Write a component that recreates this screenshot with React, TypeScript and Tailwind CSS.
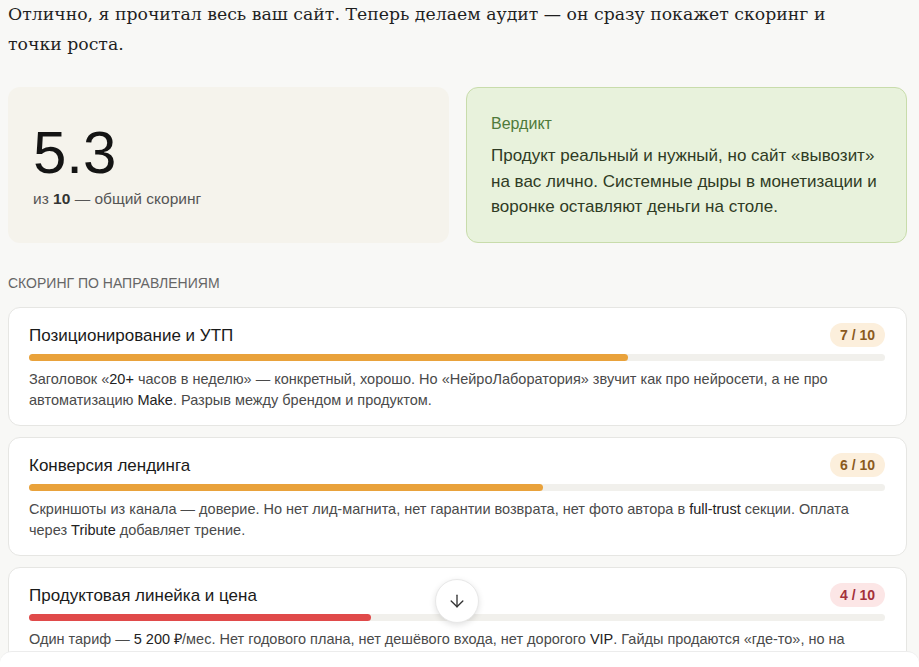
import { ArrowDown } from "lucide-react";

type Area = {
  title: string;
  score: number;
  tone: "warn" | "bad";
  text: React.ReactNode;
};

const areas: Area[] = [
  {
    title: "Позиционирование и УТП",
    score: 7,
    tone: "warn",
    text: (
      <>
        Заголовок «<b className="font-medium text-[#222]">20+</b> часов в неделю» — конкретный, хорошо. Но «НейроЛаборатория» звучит как про
        нейросети, а не про автоматизацию <b className="font-medium text-[#222]">Make</b>. Разрыв между брендом и продуктом.
      </>
    ),
  },
  {
    title: "Конверсия лендинга",
    score: 6,
    tone: "warn",
    text: (
      <>
        Скриншоты из канала — доверие. Но нет лид-магнита, нет гарантии возврата, нет фото автора в{" "}
        <b className="font-medium text-[#222]">full-trust</b> секции. Оплата через{" "}
        <b className="font-medium text-[#222]">Tribute</b> добавляет трение.
      </>
    ),
  },
  {
    title: "Продуктовая линейка и цена",
    score: 4,
    tone: "bad",
    text: (
      <>
        Один тариф — <b className="font-medium text-[#222]">5 200 ₽</b>/мес. Нет годового плана, нет дешёвого входа, нет дорогого{" "}
        <b className="font-medium text-[#222]">VIP</b>. Гайды продаются «где-то», но на сайте их не видно.
      </>
    ),
  },
];

function AreaCard({ area }: { area: Area }) {
  const warn = area.tone === "warn";
  return (
    <div className="rounded-xl border border-[#e6e6e3] bg-white pl-5 pr-[21px] pt-[15px] pb-[14px]">
      <div className="flex h-6 items-center justify-between">
        <h3 className="mt-[2px] text-[17px] leading-6 text-[#1a1a1a]">{area.title}</h3>
        <span
          className={
            warn
              ? "rounded-full bg-[#fcefdc] px-2.5 h-6 leading-6 text-[14px] font-semibold text-[#8a5a1e]"
              : "rounded-full bg-[#fce6e6] px-2.5 h-6 leading-6 text-[14px] font-semibold text-[#a3303a]"
          }
        >
          {area.score} / 10
        </span>
      </div>
      <div className="mt-[7px] h-[7px] rounded-full bg-[#f1f0ec]">
        <div
          className={warn ? "h-full rounded-full bg-[#e9a23b]" : "h-full rounded-full bg-[#e04a4a]"}
          style={{ width: `${area.score * 10}%` }}
        />
      </div>
      <p className="mt-[8px] text-[14.5px] leading-[21px] text-[#4a4a4a]">{area.text}</p>
    </div>
  );
}

export default function App() {
  return (
    <div
      className="relative h-[667px] overflow-hidden bg-[#f8f8f6]"
      style={{ fontFamily: '"Liberation Sans", Arial, sans-serif' }}
    >
      <div className="pl-2 pr-3">
        <p
          className="-mt-[1px] max-w-[850px] text-[17.3px] leading-[30px] text-[#1f1f1f]"
          style={{ fontFamily: '"DejaVu Serif", Georgia, serif' }}
        >
          Отлично, я прочитал весь ваш сайт. Теперь делаем аудит — он сразу покажет скоринг и точки роста.
        </p>

        <div className="mt-[28px] grid grid-cols-2 gap-[17px]">
          <div className="flex h-[156px] flex-col justify-center rounded-xl bg-[#f5f3ec] px-[25px]">
            <div className="mt-[4px] text-[60px] leading-[60px] text-[#141414]">5.3</div>
            <div className="mt-[4px] text-[15.5px] text-[#555]">
              из <b className="font-semibold text-[#333]">10</b> — общий скоринг
            </div>
          </div>
          <div className="h-[156px] rounded-xl border border-[#c8dcab] bg-[#e8f2dc] px-6 pt-[24px]">
            <div className="text-[16px] text-[#4f7a3a]">Вердикт</div>
            <p className="mt-[7px] text-[17px] leading-[25.5px] text-[#2f3b24]">
              Продукт реальный и нужный, но сайт «вывозит» на вас лично. Системные дыры в монетизации и воронке
              оставляют деньги на столе.
            </p>
          </div>
        </div>

        <div className="mt-[30px] text-[14px] leading-5 uppercase text-[#666]">Скоринг по направлениям</div>

        <div className="mt-[14px] flex flex-col gap-[11px]">
          {areas.map((a) => (
            <AreaCard key={a.title} area={a} />
          ))}
        </div>
      </div>

      <button className="absolute left-[435px] top-[579px] flex h-11 w-11 items-center justify-center rounded-full border border-[#e8e8e8] bg-white text-[#333] shadow-[0_2px_6px_rgba(0,0,0,0.12)]">
        <ArrowDown size={20} strokeWidth={1.6} />
      </button>

      <div className="absolute inset-x-0 top-[651px] h-10 rounded-t-xl border-t border-[#ececec] bg-white" />
    </div>
  );
}
